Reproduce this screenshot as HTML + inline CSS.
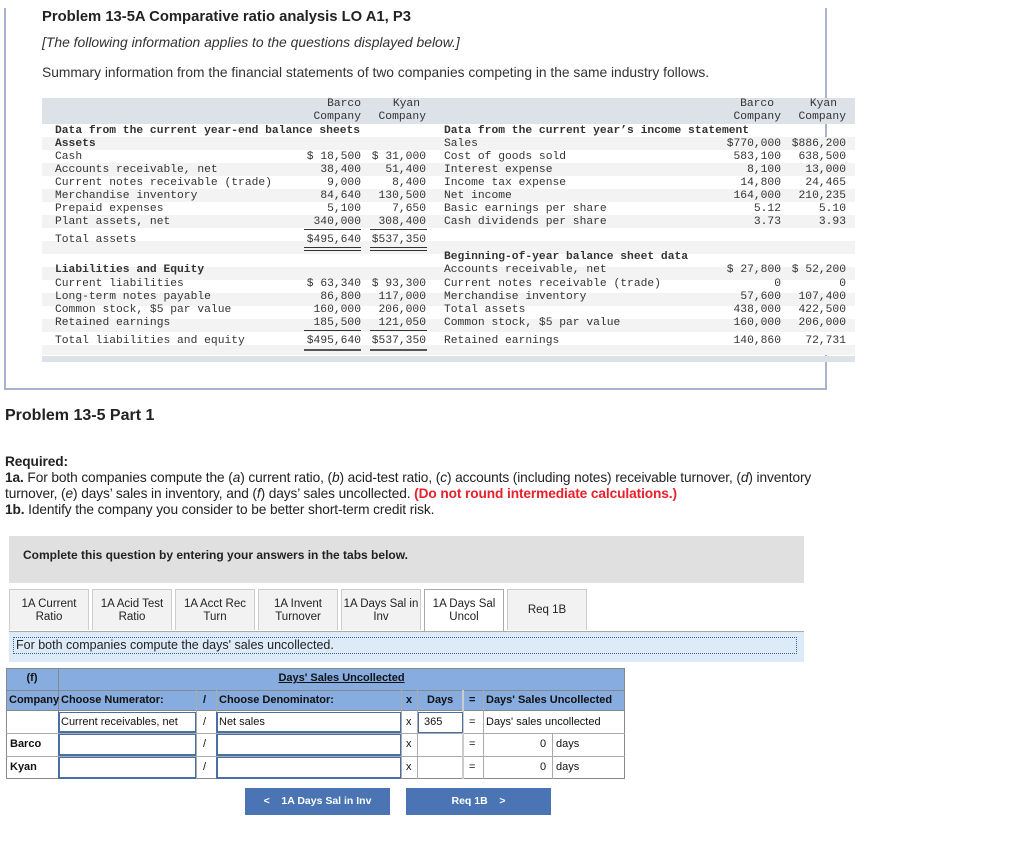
<!DOCTYPE html>
<html><head><meta charset="utf-8"><style>
*{margin:0;padding:0;box-sizing:border-box}
body{width:1024px;height:867px;background:#fff;position:relative;overflow:hidden;font-family:"Liberation Sans",sans-serif;color:#222}
.a{position:absolute;white-space:nowrap}
.m{font-family:"Liberation Mono",monospace;font-size:11.3px;line-height:13px;height:13px;color:#333}
.b{font-weight:bold}
.r{text-align:right}
.ul{position:absolute;height:1px;background:#333}
.tab{position:absolute;top:589px;height:41px;width:80px;background:#f2f2f2;border:1px solid #ccc;border-bottom:none;font-family:"Liberation Sans",sans-serif;font-size:11.5px;text-align:center;line-height:13px;padding-top:8px;color:#222}
.c{position:absolute;font-size:11px;line-height:21px;color:#111}
.inp{position:absolute;background:#fff;border:1px solid #4a6fa5;border-width:1px 1px 2px 2px}
.btn{position:absolute;top:788px;height:27px;width:145px;background:#4a74b3;color:#fff;font-weight:bold;font-size:10.5px;text-align:center;line-height:27px}
</style></head><body>
<!-- frame -->
<div class="a" style="left:4px;top:8px;width:2px;height:382px;background:#a8b4cc"></div>
<div class="a" style="left:825px;top:8px;width:2px;height:382px;background:#a8b4cc"></div>
<div class="a" style="left:4px;top:388px;width:823px;height:2px;background:#a8b4cc;border-bottom-left-radius:4px"></div>

<div class="a b" style="left:42px;top:9px;font-size:14.8px">Problem 13-5A Comparative ratio analysis LO A1, P3</div>
<div class="a" style="left:42px;top:34px;font-size:13.9px;font-style:italic;color:#333">[The following information applies to the questions displayed below.]</div>
<div class="a" style="left:42px;top:65px;font-size:13.8px;color:#333">Summary information from the financial statements of two companies competing in the same industry follows.</div>

<!-- table backgrounds -->
<div class="a" style="left:42px;top:98px;width:813px;height:26px;background:#dde1e8"></div>
<div class="a" style="left:42px;top:137px;width:813px;height:218px;background:repeating-linear-gradient(#f3f3f3 0 13px,#fff 13px 26px)"></div>
<div class="a" style="left:42px;top:356px;width:813px;height:6px;background:#dde1e8"></div>

<!-- left headers -->
<div class="a m r" style="left:290px;top:98px;width:71px">Barco</div>
<div class="a m r" style="left:290px;top:111px;width:71px">Company</div>
<div class="a m r" style="left:366px;top:98px;width:54px">Kyan</div>
<div class="a m r" style="left:366px;top:111px;width:60px">Company</div>
<div class="a m r" style="left:700px;top:98px;width:74px">Barco</div>
<div class="a m r" style="left:700px;top:111px;width:81px">Company</div>
<div class="a m r" style="left:785px;top:98px;width:52px">Kyan</div>
<div class="a m r" style="left:785px;top:111px;width:61px">Company</div>

<div class="a m b" style="left:55px;top:125px">Data from the current year-end balance sheets</div>
<div class="a m b" style="left:55px;top:138px">Assets</div>
<div class="a m" style="left:55px;top:151px">Cash</div>
<div class="a m" style="left:55px;top:164px">Accounts receivable, net</div>
<div class="a m" style="left:55px;top:177px">Current notes receivable (trade)</div>
<div class="a m" style="left:55px;top:190px">Merchandise inventory</div>
<div class="a m" style="left:55px;top:203px">Prepaid expenses</div>
<div class="a m" style="left:55px;top:216px">Plant assets, net</div>
<div class="a m" style="left:55px;top:234px">Total assets</div>
<div class="a m b" style="left:55px;top:264px">Liabilities and Equity</div>
<div class="a m" style="left:55px;top:278px">Current liabilities</div>
<div class="a m" style="left:55px;top:291px">Long-term notes payable</div>
<div class="a m" style="left:55px;top:304px">Common stock, $5 par value</div>
<div class="a m" style="left:55px;top:317px">Retained earnings</div>
<div class="a m" style="left:55px;top:335px">Total liabilities and equity</div>

<div class="a m r" style="left:290px;top:151px;width:71px">$ 18,500</div>
<div class="a m r" style="left:290px;top:164px;width:71px">38,400</div>
<div class="a m r" style="left:290px;top:177px;width:71px">9,000</div>
<div class="a m r" style="left:290px;top:190px;width:71px">84,640</div>
<div class="a m r" style="left:290px;top:203px;width:71px">5,100</div>
<div class="a m r" style="left:290px;top:216px;width:71px">340,000</div>
<div class="a m r" style="left:290px;top:234px;width:71px">$495,640</div>
<div class="a m r" style="left:290px;top:278px;width:71px">$ 63,340</div>
<div class="a m r" style="left:290px;top:291px;width:71px">86,800</div>
<div class="a m r" style="left:290px;top:304px;width:71px">160,000</div>
<div class="a m r" style="left:290px;top:317px;width:71px">185,500</div>
<div class="a m r" style="left:290px;top:335px;width:71px">$495,640</div>

<div class="a m r" style="left:356px;top:151px;width:70px">$ 31,000</div>
<div class="a m r" style="left:356px;top:164px;width:70px">51,400</div>
<div class="a m r" style="left:356px;top:177px;width:70px">8,400</div>
<div class="a m r" style="left:356px;top:190px;width:70px">130,500</div>
<div class="a m r" style="left:356px;top:203px;width:70px">7,650</div>
<div class="a m r" style="left:356px;top:216px;width:70px">308,400</div>
<div class="a m r" style="left:356px;top:234px;width:70px">$537,350</div>
<div class="a m r" style="left:356px;top:278px;width:70px">$ 93,300</div>
<div class="a m r" style="left:356px;top:291px;width:70px">117,000</div>
<div class="a m r" style="left:356px;top:304px;width:70px">206,000</div>
<div class="a m r" style="left:356px;top:317px;width:70px">121,050</div>
<div class="a m r" style="left:356px;top:335px;width:70px">$537,350</div>

<!-- underlines -->
<div class="ul" style="left:304px;top:229px;width:57px"></div>
<div class="ul" style="left:370px;top:229px;width:57px"></div>
<div class="ul" style="left:304px;top:247px;width:57px"></div>
<div class="ul" style="left:304px;top:250px;width:57px"></div>
<div class="ul" style="left:370px;top:247px;width:57px"></div>
<div class="ul" style="left:370px;top:250px;width:57px"></div>
<div class="ul" style="left:304px;top:330px;width:57px"></div>
<div class="ul" style="left:370px;top:330px;width:57px"></div>
<div class="ul" style="left:304px;top:349px;width:57px;height:2px;background:#555"></div>
<div class="ul" style="left:370px;top:349px;width:57px;height:2px;background:#555"></div>

<!-- right -->
<div class="a m b" style="left:444px;top:125px">Data from the current year’s income statement</div>
<div class="a m" style="left:444px;top:138px">Sales</div>
<div class="a m" style="left:444px;top:151px">Cost of goods sold</div>
<div class="a m" style="left:444px;top:164px">Interest expense</div>
<div class="a m" style="left:444px;top:177px">Income tax expense</div>
<div class="a m" style="left:444px;top:190px">Net income</div>
<div class="a m" style="left:444px;top:203px">Basic earnings per share</div>
<div class="a m" style="left:444px;top:216px">Cash dividends per share</div>
<div class="a m b" style="left:444px;top:251px">Beginning-of-year balance sheet data</div>
<div class="a m" style="left:444px;top:264px">Accounts receivable, net</div>
<div class="a m" style="left:444px;top:278px">Current notes receivable (trade)</div>
<div class="a m" style="left:444px;top:291px">Merchandise inventory</div>
<div class="a m" style="left:444px;top:304px">Total assets</div>
<div class="a m" style="left:444px;top:317px">Common stock, $5 par value</div>
<div class="a m" style="left:444px;top:335px">Retained earnings</div>

<div class="a m r" style="left:700px;top:138px;width:81px">$770,000</div>
<div class="a m r" style="left:700px;top:151px;width:81px">583,100</div>
<div class="a m r" style="left:700px;top:164px;width:81px">8,100</div>
<div class="a m r" style="left:700px;top:177px;width:81px">14,800</div>
<div class="a m r" style="left:700px;top:190px;width:81px">164,000</div>
<div class="a m r" style="left:700px;top:203px;width:81px">5.12</div>
<div class="a m r" style="left:700px;top:216px;width:81px">3.73</div>
<div class="a m r" style="left:700px;top:264px;width:81px">$ 27,800</div>
<div class="a m r" style="left:700px;top:278px;width:81px">0</div>
<div class="a m r" style="left:700px;top:291px;width:81px">57,600</div>
<div class="a m r" style="left:700px;top:304px;width:81px">438,000</div>
<div class="a m r" style="left:700px;top:317px;width:81px">160,000</div>
<div class="a m r" style="left:700px;top:335px;width:81px">140,860</div>

<div class="a m r" style="left:780px;top:138px;width:66px">$886,200</div>
<div class="a m r" style="left:780px;top:151px;width:66px">638,500</div>
<div class="a m r" style="left:780px;top:164px;width:66px">13,000</div>
<div class="a m r" style="left:780px;top:177px;width:66px">24,465</div>
<div class="a m r" style="left:780px;top:190px;width:66px">210,235</div>
<div class="a m r" style="left:780px;top:203px;width:66px">5.10</div>
<div class="a m r" style="left:780px;top:216px;width:66px">3.93</div>
<div class="a m r" style="left:780px;top:264px;width:66px">$ 52,200</div>
<div class="a m r" style="left:780px;top:278px;width:66px">0</div>
<div class="a m r" style="left:780px;top:291px;width:66px">107,400</div>
<div class="a m r" style="left:780px;top:304px;width:66px">422,500</div>
<div class="a m r" style="left:780px;top:317px;width:66px">206,000</div>
<div class="a m r" style="left:780px;top:335px;width:66px">72,731</div>

<!-- part 1 -->
<div class="a b" style="left:5px;top:407px;font-size:16px">Problem 13-5 Part 1</div>
<div class="a" style="left:5px;top:454px;font-size:13.7px;line-height:16px;white-space:normal;width:826px;letter-spacing:-0.1px">
<b>Required:</b><br>
<b>1a.</b> For both companies compute the (<i>a</i>) current ratio, (<i>b</i>) acid-test ratio, (<i>c</i>) accounts (including notes) receivable turnover, (<i>d</i>) inventory turnover, (<i>e</i>) days’ sales in inventory, and (<i>f</i>) days’ sales uncollected. <b style="color:#e8202a">(Do not round intermediate calculations.)</b><br>
<b>1b.</b> Identify the company you consider to be better short-term credit risk.</div>

<div class="a" style="left:9px;top:536px;width:795px;height:47px;background:#e0e0e0"></div>
<div class="a b" style="left:23px;top:548px;font-size:12px">Complete this question by entering your answers in the tabs below.</div>

<div class="tab" style="left:9px">1A Current<br>Ratio</div>
<div class="tab" style="left:92px">1A Acid Test<br>Ratio</div>
<div class="tab" style="left:175px">1A Acct Rec<br>Turn</div>
<div class="tab" style="left:258px">1A Invent<br>Turnover</div>
<div class="tab" style="left:341px">1A Days Sal in<br>Inv</div>
<div class="tab" style="left:424px;background:#fff;height:43px;border-color:#aaa">1A Days Sal<br>Uncol</div>
<div class="tab" style="left:507px;padding-top:14px">Req 1B</div>

<div class="a" style="left:9px;top:631px;width:795px;height:31px;background:#ddeaf7;border-top:1px solid #aaa"></div>
<div class="a" style="left:13px;top:637px;width:784px;height:17px;border:1px dotted #3a5ea8;font-size:12.5px;line-height:15px;padding-left:2px">For both companies compute the days' sales uncollected.</div>

<!-- answer table -->
<div class="a" style="left:6px;top:668px;width:619px;height:43px;background:#86ace0;border:1px solid #888"></div>
<div class="a" style="left:6px;top:711px;width:619px;height:68px;border:1px solid #888;border-top:none"></div>
<div class="a" style="left:58px;top:668px;width:1px;height:111px;background:#888"></div>
<div class="a" style="left:6px;top:690px;width:619px;height:1px;background:#888"></div>
<div class="a" style="left:6px;top:733px;width:619px;height:1px;background:#aaa"></div>
<div class="a" style="left:6px;top:756px;width:619px;height:1px;background:#aaa"></div>
<div class="a" style="left:196px;top:690px;width:1px;height:89px;background:#aaa"></div>
<div class="a" style="left:216px;top:690px;width:1px;height:89px;background:#aaa"></div>
<div class="a" style="left:401px;top:690px;width:1px;height:89px;background:#aaa"></div>
<div class="a" style="left:417px;top:690px;width:1px;height:89px;background:#aaa"></div>
<div class="a" style="left:462px;top:690px;width:2px;height:89px;background:#ccc"></div>
<div class="a" style="left:483px;top:690px;width:1px;height:89px;background:#aaa"></div>
<div class="a" style="left:552px;top:733px;width:1px;height:46px;background:#aaa"></div>

<div class="c b" style="left:6px;top:668px;width:52px;text-align:center">(f)</div>
<div class="c b" style="left:58px;top:668px;width:567px;text-align:center;text-decoration:underline">Days' Sales Uncollected</div>
<div class="c b" style="left:9px;top:690px">Company</div>
<div class="c b" style="left:61px;top:690px">Choose Numerator:</div>
<div class="c b" style="left:203px;top:690px">/</div>
<div class="c b" style="left:219px;top:690px">Choose Denominator:</div>
<div class="c b" style="left:406px;top:690px">x</div>
<div class="c b" style="left:427px;top:690px">Days</div>
<div class="c b" style="left:469px;top:690px">=</div>
<div class="c b" style="left:486px;top:690px">Days' Sales Uncollected</div>

<div class="inp" style="left:58px;top:712px;width:138px;height:21px"></div>
<div class="c" style="left:61px;top:712px">Current receivables, net</div>
<div class="c" style="left:203px;top:712px">/</div>
<div class="inp" style="left:216px;top:712px;width:185px;height:21px"></div>
<div class="c" style="left:219px;top:712px">Net sales</div>
<div class="c" style="left:406px;top:712px">x</div>
<div class="inp" style="left:418px;top:712px;width:45px;height:21px;border-width:1px"></div>
<div class="c" style="left:424px;top:712px">365</div>
<div class="c" style="left:469px;top:712px">=</div>
<div class="c" style="left:486px;top:712px">Days' sales uncollected</div>

<div class="c b" style="left:10px;top:734px">Barco</div>
<div class="inp" style="left:58px;top:734px;width:138px;height:22px"></div>
<div class="c" style="left:203px;top:734px">/</div>
<div class="inp" style="left:216px;top:734px;width:185px;height:22px"></div>
<div class="c" style="left:406px;top:734px">x</div>
<div class="c" style="left:469px;top:734px">=</div>
<div class="c" style="left:540px;top:734px">0</div>
<div class="c" style="left:556px;top:734px">days</div>

<div class="c b" style="left:10px;top:757px">Kyan</div>
<div class="inp" style="left:58px;top:757px;width:138px;height:22px"></div>
<div class="c" style="left:203px;top:757px">/</div>
<div class="inp" style="left:216px;top:757px;width:185px;height:22px"></div>
<div class="c" style="left:406px;top:757px">x</div>
<div class="c" style="left:469px;top:757px">=</div>
<div class="c" style="left:540px;top:757px">0</div>
<div class="c" style="left:556px;top:757px">days</div>

<div class="btn" style="left:245px">&lt;&nbsp;&nbsp;&nbsp; 1A Days Sal in Inv</div>
<div class="btn" style="left:406px">Req 1B &nbsp;&nbsp; &gt;</div>
</body></html>
